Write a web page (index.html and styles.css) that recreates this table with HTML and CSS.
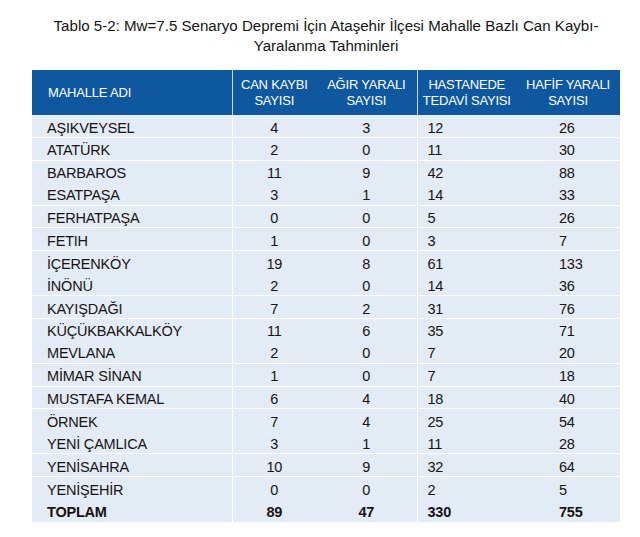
FILE: index.html
```html
<!DOCTYPE html>
<html lang="tr">
<head>
<meta charset="utf-8">
<link rel="stylesheet" href="styles.css">
</head>
<body>
<div class="page">
  <h1 class="title">Tablo 5-2: Mw=7.5 Senaryo Depremi İçin Ataşehir İlçesi Mahalle Bazlı Can Kaybı-<br>Yaralanma Tahminleri</h1>
  <table class="data">
    <colgroup>
      <col class="c0"><col class="c1"><col class="c2"><col class="c3"><col class="c4">
    </colgroup>
    <thead>
      <tr>
        <th class="name">MAHALLE ADI</th>
        <th>CAN KAYBI<br>SAYISI</th>
        <th class="sep">AĞIR YARALI<br>SAYISI</th>
        <th>HASTANEDE<br>TEDAVİ SAYISI</th>
        <th>HAFİF YARALI<br>SAYISI</th>
      </tr>
    </thead>
    <tbody>
      <tr class="ln"><td class="name">AŞIKVEYSEL</td><td>4</td><td class="sep">3</td><td class="l3">12</td><td class="l4">26</td></tr>
      <tr class="ln"><td class="name">ATATÜRK</td><td>2</td><td class="sep">0</td><td class="l3">11</td><td class="l4">30</td></tr>
      <tr><td class="name">BARBAROS</td><td>11</td><td class="sep">9</td><td class="l3">42</td><td class="l4">88</td></tr>
      <tr class="ln"><td class="name">ESATPAŞA</td><td>3</td><td class="sep">1</td><td class="l3">14</td><td class="l4">33</td></tr>
      <tr class="ln"><td class="name">FERHATPAŞA</td><td>0</td><td class="sep">0</td><td class="l3">5</td><td class="l4">26</td></tr>
      <tr class="ln"><td class="name">FETIH</td><td>1</td><td class="sep">0</td><td class="l3">3</td><td class="l4">7</td></tr>
      <tr><td class="name">İÇERENKÖY</td><td>19</td><td class="sep">8</td><td class="l3">61</td><td class="l4">133</td></tr>
      <tr class="ln"><td class="name">İNÖNÜ</td><td>2</td><td class="sep">0</td><td class="l3">14</td><td class="l4">36</td></tr>
      <tr class="ln"><td class="name">KAYIŞDAĞI</td><td>7</td><td class="sep">2</td><td class="l3">31</td><td class="l4">76</td></tr>
      <tr><td class="name">KÜÇÜKBAKKALKÖY</td><td>11</td><td class="sep">6</td><td class="l3">35</td><td class="l4">71</td></tr>
      <tr class="ln"><td class="name">MEVLANA</td><td>2</td><td class="sep">0</td><td class="l3">7</td><td class="l4">20</td></tr>
      <tr class="ln"><td class="name">MİMAR SİNAN</td><td>1</td><td class="sep">0</td><td class="l3">7</td><td class="l4">18</td></tr>
      <tr class="ln"><td class="name">MUSTAFA KEMAL</td><td>6</td><td class="sep">4</td><td class="l3">18</td><td class="l4">40</td></tr>
      <tr><td class="name">ÖRNEK</td><td>7</td><td class="sep">4</td><td class="l3">25</td><td class="l4">54</td></tr>
      <tr class="ln"><td class="name">YENİ ÇAMLICA</td><td>3</td><td class="sep">1</td><td class="l3">11</td><td class="l4">28</td></tr>
      <tr class="ln"><td class="name">YENİSAHRA</td><td>10</td><td class="sep">9</td><td class="l3">32</td><td class="l4">64</td></tr>
      <tr><td class="name">YENİŞEHİR</td><td>0</td><td class="sep">0</td><td class="l3">2</td><td class="l4">5</td></tr>
      <tr class="total"><td class="name">TOPLAM</td><td>89</td><td class="sep">47</td><td class="l3">330</td><td class="l4">755</td></tr>
    </tbody>
  </table>
</div>
</body>
</html>
```

FILE: styles.css
```css
html, body {
  margin: 0;
  padding: 0;
  background: #ffffff;
}

.page {
  padding: 16px 0 0 32px;
  font-family: "Liberation Sans", Arial, sans-serif;
  color: #151515;
}

.title {
  width: 588px;
  margin: 0 0 14px 0;
  font-size: 15.1px;
  font-weight: normal;
  line-height: 20px;
  text-align: center;
  color: #151515;
  letter-spacing: 0;
}

.data {
  width: 588px;
  border-collapse: collapse;
  table-layout: fixed;
  background: #e3ebf4;
}

.c0 { width: 200px; }
.c1 { width: 84px; }
.c2 { width: 101px; }
.c3 { width: 99px; }
.c4 { width: 104px; }

.data thead th {
  height: 45px;
  padding: 0;
  box-sizing: border-box;
  background: #0f589f;
  color: #ffffff;
  font-size: 13px;
  font-weight: normal;
  line-height: 16px;
  text-align: center;
  vertical-align: middle;
  letter-spacing: -0.2px;
}

.data thead th.name {
  text-align: left;
  padding-left: 16px;
  border-right: 1px solid #c8d6e8;
}

.data thead th.sep {
  border-right: 1px solid #c8d6e8;
}

.data tbody td {
  height: 22.6px;
  padding: 3px 0 0 0;
  box-sizing: border-box;
  font-size: 14.5px;
  line-height: 16px;
  text-align: center;
  vertical-align: middle;
  letter-spacing: -0.2px;
}

.data tbody tr.ln td {
  border-bottom: 1px solid #ffffff;
}

.data tbody td.name {
  text-align: left;
  padding-left: 15px;
  border-right: 1px solid #ffffff;
}

.data tbody td.sep {
  border-right: 1px solid #ffffff;
}

.data tbody td.l3 {
  text-align: left;
  padding-left: 10px;
}

.data tbody td.l4 {
  text-align: left;
  padding-left: 43px;
}

.data tbody tr.total td {
  font-weight: bold;
}
```
